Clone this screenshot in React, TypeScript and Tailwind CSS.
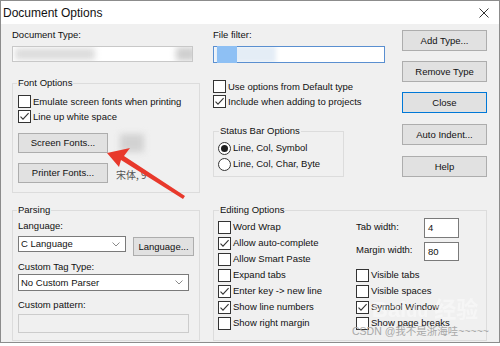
import React from "react";
import clsx from "clsx";

function Box({ checked }: { checked?: boolean }) {
  return (
    <span className="flex h-[13px] w-[13px] shrink-0 items-center justify-center border border-[#333] bg-white">
      {checked && (
        <svg width="11" height="11" viewBox="0 0 11 11">
          <path d="M1.5 5.6L4 8.2L9.6 2.2" fill="none" stroke="#333" strokeWidth="1.1" />
        </svg>
      )}
    </span>
  );
}

function Check({ label, checked, tall }: { label: string; checked?: boolean; tall?: boolean }) {
  return (
    <div className={clsx("flex items-center gap-[2px] whitespace-nowrap", tall ? "h-[16px]" : "h-[15px]")}>
      <Box checked={checked} />
      <span>{label}</span>
    </div>
  );
}

function Radio({ label, checked }: { label: string; checked?: boolean }) {
  return (
    <div className="flex h-[16px] items-center gap-[2px] whitespace-nowrap">
      <span className="flex h-[13px] w-[13px] items-center justify-center rounded-full border border-[#333] bg-white">
        {checked && <span className="h-[7px] w-[7px] rounded-full bg-[#1e1e1e]" />}
      </span>
      <span>{label}</span>
    </div>
  );
}

function Btn({ children, className }: { children: React.ReactNode; className?: string }) {
  return (
    <button className={clsx("flex items-center justify-center border bg-[#e1e1e1] leading-[14px]", className ?? "border-[#adadad]")}>
      {children}
    </button>
  );
}

function Chevron() {
  return (
    <svg width="8" height="5" viewBox="0 0 8 5" className="shrink-0">
      <path d="M0.5 0.5L4 4L7.5 0.5" fill="none" stroke="#8a8a8a" strokeWidth="1" />
    </svg>
  );
}

function Select({ value, className }: { value: string; className: string }) {
  return (
    <div className={clsx("flex items-center justify-between border border-[#7a7a7a] bg-white pl-[2px] pr-[5px]", className)}>
      <span>{value}</span>
      <Chevron />
    </div>
  );
}

export default function App() {
  return (
    <div className="relative h-[346px] w-[500px] bg-white font-['Liberation_Sans',Arial,sans-serif] text-[9.5px] leading-[14px] text-[#111]">
      <div className="flex h-[343px] w-[500px] flex-col border border-[#8c8c8c]">
        {/* title bar */}
        <div className="flex h-[23px] items-center justify-between bg-white pl-[2px] pr-[10px]">
          <span className="text-[12px]">Document Options</span>
          <svg width="10" height="10" viewBox="0 0 10 10">
            <path d="M0.5 0.5L9.5 9.5M9.5 0.5L0.5 9.5" stroke="#333" strokeWidth="1" />
          </svg>
        </div>

        <div className="flex flex-1 flex-col bg-[#f0f0f0] pl-[11px]">
          {/* top section */}
          <div className="flex">
            <div className="flex w-[188px] flex-col">
              <span className="mt-[4px]">Document Type:</span>
              <div className="mt-[4px] flex h-[16px] w-[181px] items-center overflow-hidden border border-[#c8c8c8] bg-white">
                <div className="ml-[2px] h-[12px] w-[80px] bg-[#dcdcdc] blur-[3px]" />
                <div className="ml-auto mr-[-4px] h-[14px] w-[20px] bg-[#cfcfcf] blur-[3px]" />
              </div>
              <fieldset className="mt-[14px] h-[117px] border border-[#dcdcdc] pl-[5px]">
                <legend className="-ml-[1px] px-[1px]">Font Options</legend>
                <div className="mt-[4px]">
                  <Check label="Emulate screen fonts when printing" />
                  <Check label="Line up white space" checked />
                </div>
                <div className="mt-[9px] flex items-center">
                  <Btn className="h-[20px] w-[90px] border-[#adadad]">Screen Fonts...</Btn>
                  <div className="ml-[12px] h-[18px] w-[24px] bg-[#d2d2d2] blur-[3px]" />
                </div>
                <div className="mt-[10px] flex items-center">
                  <Btn className="h-[20px] w-[90px] border-[#adadad]">Printer Fonts...</Btn>
                  <span className="ml-[8px] mt-[4px] font-['Noto_Sans_CJK_SC',sans-serif] text-[10px] text-[#555]">宋体, 9</span>
                </div>
              </fieldset>
            </div>

            <div className="ml-[13px] flex w-[172px] flex-col">
              <span className="mt-[4px]">File filter:</span>
              <div className="mt-[4px] flex h-[17px] w-[172px] items-center overflow-hidden border border-[#5a8fd0] bg-white">
                <div className="h-[17px] w-[62px] bg-[#e4edf6] blur-[2px]" />
                <div className="absolute ml-[3px] h-[17px] w-[20px] bg-[#8ec0f4]" />
              </div>
              <div className="mt-[16px] flex flex-col">
                <Check label="Use options from Default type" />
                <Check label="Include when adding to projects" checked />
              </div>
              <fieldset className="mt-[15px] h-[53px] w-[131px] border border-[#dcdcdc] pl-[4px]">
                <legend className="ml-[1px] px-[1px]">Status Bar Options</legend>
                <div className="mt-[2px]">
                  <Radio label="Line, Col, Symbol" checked />
                  <Radio label="Line, Col, Char, Byte" />
                </div>
              </fieldset>
            </div>

            <div className="ml-[17px] flex w-[85px] flex-col">
              <Btn className="mt-[6px] h-[21px] border-[#adadad]">Add Type...</Btn>
              <Btn className="mt-[10px] h-[21px] border-[#adadad]">Remove Type</Btn>
              <Btn className="mt-[10px] h-[21px] border-[#0078d7]">Close</Btn>
              <Btn className="mt-[11px] h-[21px] border-[#adadad]">Auto Indent...</Btn>
              <Btn className="mt-[11px] h-[21px] border-[#adadad]">Help</Btn>
            </div>
          </div>

          {/* bottom section */}
          <div className="mt-[10px] flex">
            <fieldset className="h-[138px] w-[188px] border border-[#dcdcdc] pl-[5px]">
              <legend className="-ml-[1px] px-[1px]">Parsing</legend>
              <div className="mt-[2px]">Language:</div>
              <div className="mt-[3px] flex items-start">
                <Select value="C Language" className="h-[16px] w-[108px]" />
                <Btn className="ml-[7px] mt-[1px] h-[19px] w-[61px] border-[#adadad]">Language...</Btn>
              </div>
              <div className="mt-[4px]">Custom Tag Type:</div>
              <Select value="No Custom Parser" className="h-[17px] w-[171px]" />
              <div className="mt-[7px]">Custom pattern:</div>
              <div className="mt-[2px] h-[19px] w-[171px] border border-[#cccccc] bg-[#f0f0f0]" />
            </fieldset>

            <fieldset className="ml-[13px] h-[138px] w-[274px] border border-[#dcdcdc] pl-[4px]">
              <legend className="ml-[1px] px-[1px]">Editing Options</legend>
              <div className="flex">
                <div className="mt-[2px] flex w-[138px] flex-col">
                  <Check label="Word Wrap" tall />
                  <Check label="Allow auto-complete" checked tall />
                  <Check label="Allow Smart Paste" tall />
                  <Check label="Expand tabs" tall />
                  <Check label="Enter key -> new line" checked tall />
                  <Check label="Show line numbers" checked tall />
                  <Check label="Show right margin" tall />
                </div>
                <div className="mt-[1px] flex flex-col">
                  <div className="flex h-[20px] items-start">
                    <span className="w-[68px] pt-[2px]">Tab width:</span>
                    <div className="flex h-[20px] w-[35px] items-center border border-[#7a7a7a] bg-white pl-[3px]">4</div>
                  </div>
                  <div className="mt-[4px] flex h-[19px] items-start">
                    <span className="w-[68px] pt-[1px]">Margin width:</span>
                    <div className="flex h-[19px] w-[35px] items-center border border-[#7a7a7a] bg-white pl-[3px]">80</div>
                  </div>
                  <div className="mt-[6px] flex flex-col">
                    <Check label="Visible tabs" tall />
                    <Check label="Visible spaces" tall />
                    <Check label="Symbol Window" checked tall />
                    <Check label="Show page breaks" tall />
                  </div>
                </div>
              </div>
            </fieldset>
          </div>
        </div>
      </div>

      {/* watermarks */}
      <span className="pointer-events-none absolute left-[372px] top-[298px] whitespace-nowrap font-['Liberation_Sans','Noto_Sans_CJK_SC',sans-serif] text-[22px] font-bold leading-[24px] text-white opacity-40">
        Bai<span className="text-[18px]">du</span> 经验
      </span>
      <span className="pointer-events-none absolute left-[352px] top-[324px] whitespace-nowrap font-['Liberation_Sans','Noto_Sans_CJK_SC',sans-serif] text-[10.5px] leading-[14px] text-[#a8a8a8]">
        CSDN @我不是浙海哇~~~~~
      </span>

      {/* red annotation arrow */}
      <svg className="pointer-events-none absolute left-0 top-0" width="500" height="346" viewBox="0 0 500 346">
        <polygon
          points="107,153 130,148 124,156 185,196 183,199 121,160 119,167"
          fill="#e8392c"
        />
      </svg>
    </div>
  );
}
